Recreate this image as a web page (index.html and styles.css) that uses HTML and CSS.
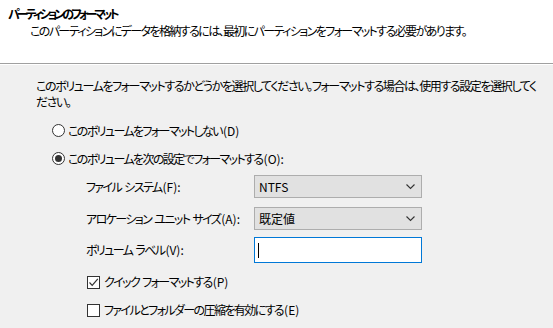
FILE: index.html
```html
<!DOCTYPE html>
<html>
<head>
  <meta charset="utf-8">
  <title>パーティションのフォーマット</title>
  <link rel="stylesheet" href="styles.css">
</head>
<body>
  <div class="header">
    <div class="title">パーティションのフォーマット</div>
    <div class="subtitle">このパーティションにデータを格納するには、最初にパーティションをフォーマットする必要があります。</div>
  </div>

  <div class="content">
    <p class="intro">このボリュームをフォーマットするかどうかを選択してください。フォーマットする場合は、使用する設定を選択してく<br>ださい。</p>

    <label class="option first">
      <span class="radio"></span>
      <span>このボリュームをフォーマットしない<span class="latin">(D)</span></span>
    </label>
    <label class="option second">
      <span class="radio checked"></span>
      <span>このボリュームを次の設定でフォーマットする<span class="latin">(O):</span></span>
    </label>

    <div class="settings">
      <div class="row row-fs">
        <span class="label">ファイル システム<span class="latin">(F):</span></span>
        <div class="combo">
          <span>NTFS</span>
          <svg width="9" height="6" viewBox="0 0 9 6"><path d="M0.5 0.5 L4.5 4.5 L8.5 0.5" fill="none" stroke="#333" stroke-width="1.1"/></svg>
        </div>
      </div>
      <div class="row row-au">
        <span class="label">アロケーション ユニット サイズ<span class="latin">(A):</span></span>
        <div class="combo">
          <span>既定値</span>
          <svg width="9" height="6" viewBox="0 0 9 6"><path d="M0.5 0.5 L4.5 4.5 L8.5 0.5" fill="none" stroke="#333" stroke-width="1.1"/></svg>
        </div>
      </div>
      <div class="row row-vl">
        <span class="label">ボリューム ラベル<span class="latin">(V):</span></span>
        <div class="textbox"><span class="caret"></span></div>
      </div>

      <label class="check first">
        <span class="box">
          <svg width="11" height="11" viewBox="0 0 11 11"><path d="M1.5 5.5 L4.2 8.3 L9.8 1.8" fill="none" stroke="#333" stroke-width="1.2"/></svg>
        </span>
        <span>クイック フォーマットする<span class="latin">(P)</span></span>
      </label>
      <label class="check second">
        <span class="box"></span>
        <span>ファイルとフォルダーの圧縮を有効にする<span class="latin">(E)</span></span>
      </label>
    </div>
  </div>
</body>
</html>
```

FILE: styles.css
```css
html, body {
  margin: 0;
  padding: 0;
}

body {
  width: 553px;
  height: 328px;
  overflow: hidden;
  background-color: #f0f0f0;
  color: #000;
  font-family: "Noto Sans CJK JP", "Noto Sans", sans-serif;
  font-size: 12px;
  line-height: 16px;
  font-feature-settings: "palt";
  letter-spacing: -1.6px;
  word-spacing: 2px;
  white-space: nowrap;
}

.latin {
  letter-spacing: 0;
  padding-left: 1px;
}

.header {
  height: 64px;
  box-sizing: border-box;
  padding: 6px 0 0 8px;
  background-color: #fff;
  border-bottom: 1px solid #a0a0a0;
  box-shadow: 0 1px 0 #fff;
}

.title {
  font-weight: bold;
  letter-spacing: -3px;
}

.subtitle {
  margin-top: 1px;
  padding-left: 22px;
}

.content {
  padding: 14px 0 0 36px;
}

.intro {
  margin: 0;
  letter-spacing: -1.4px;
}

.option {
  display: flex;
  align-items: center;
  gap: 3px;
  height: 17px;
  padding-left: 16px;
}

.option.first {
  margin-top: 12px;
}

.option.second {
  margin-top: 11px;
}

.radio {
  width: 13px;
  height: 13px;
  box-sizing: border-box;
  border: 1px solid #333;
  border-radius: 50%;
  background-color: #fff;
  display: flex;
  align-items: center;
  justify-content: center;
}

.radio.checked::after {
  content: "";
  width: 7px;
  height: 7px;
  border-radius: 50%;
  background-color: #333;
}

.settings {
  padding-left: 50px;
}

.row {
  display: flex;
  align-items: center;
}

.row-fs {
  margin-top: 8px;
}

.row-au {
  margin-top: 9px;
}

.row-vl {
  margin-top: 7px;
}

.label {
  width: 168px;
}

.combo {
  width: 168px;
  height: 23px;
  box-sizing: border-box;
  border: 1px solid #adadad;
  background-color: #e1e1e1;
  display: flex;
  align-items: center;
  justify-content: space-between;
  padding: 0 6px 0 4px;
  letter-spacing: 0;
}

.textbox {
  width: 168px;
  height: 26px;
  box-sizing: border-box;
  border: 1px solid #0078d7;
  background-color: #fff;
  display: flex;
  align-items: center;
  padding-left: 3px;
}

.caret {
  width: 1px;
  height: 15px;
  background-color: #000;
}

.check {
  display: flex;
  align-items: center;
  gap: 4px;
  height: 16px;
  padding-left: 1px;
}

.check.first {
  margin-top: 11px;
}

.check.second {
  margin-top: 12px;
}

.box {
  width: 13px;
  height: 13px;
  box-sizing: border-box;
  border: 1px solid #333;
  background-color: #fff;
  display: flex;
  align-items: center;
  justify-content: center;
}
```
